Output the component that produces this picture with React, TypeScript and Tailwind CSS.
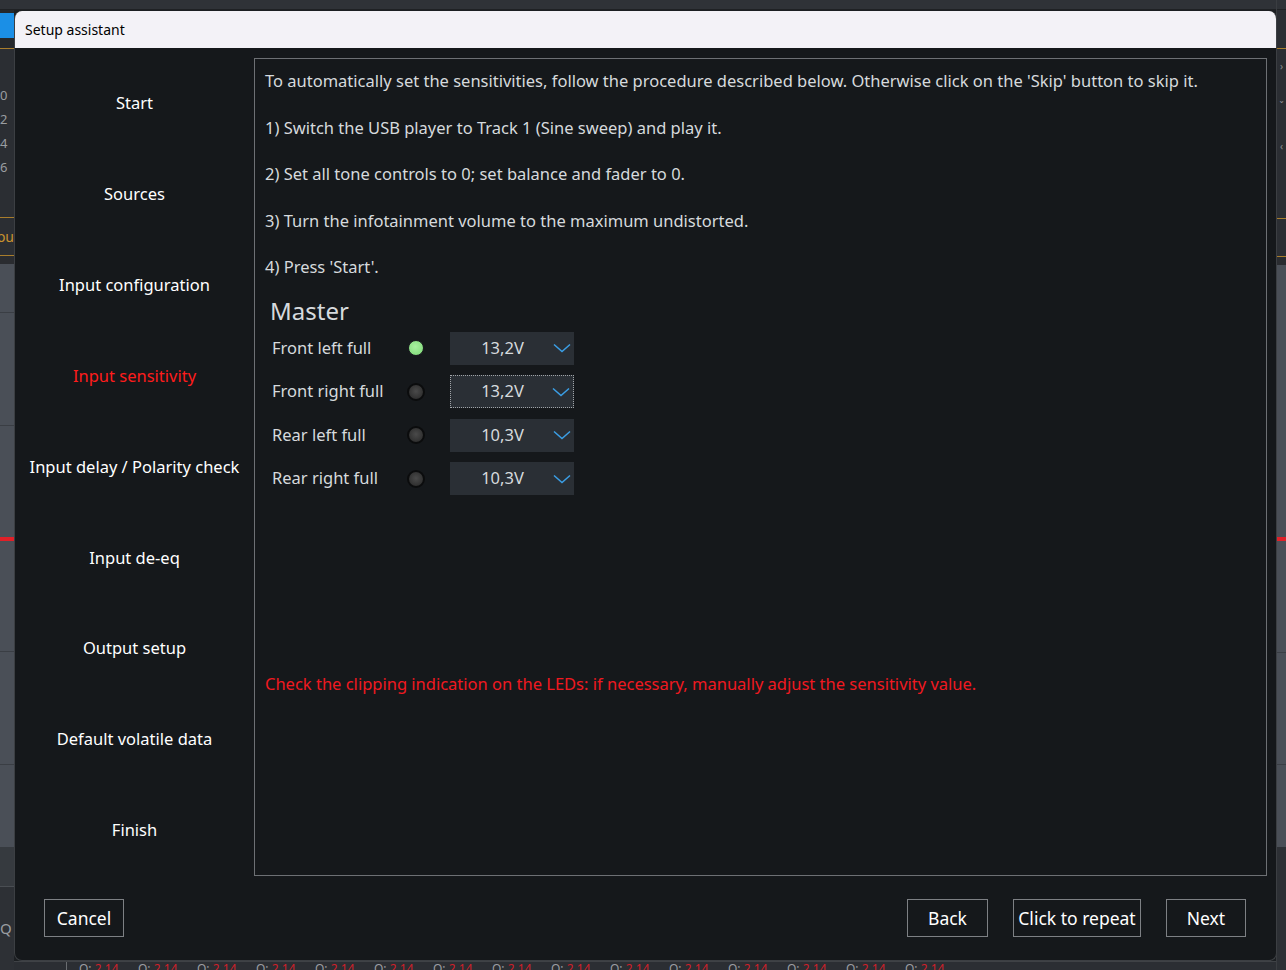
import React from 'react';

const STEPS = [
  'Start',
  'Sources',
  'Input configuration',
  'Input sensitivity',
  'Input delay / Polarity check',
  'Input de-eq',
  'Output setup',
  'Default volatile data',
  'Finish',
];

const CHANNELS = [
  { name: 'Front left full', value: '13,2V', on: true, focus: false },
  { name: 'Front right full', value: '13,2V', on: false, focus: true },
  { name: 'Rear left full', value: '10,3V', on: false, focus: false },
  { name: 'Rear right full', value: '10,3V', on: false, focus: false },
];

const LINES = [
  "To automatically set the sensitivities, follow the procedure described below. Otherwise click on the 'Skip' button to skip it.",
  '1) Switch the USB player to Track 1 (Sine sweep) and play it.',
  '2) Set all tone controls to 0; set balance and fader to 0.',
  '3) Turn the infotainment volume to the maximum undistorted.',
  "4) Press 'Start'.",
];

function Chevron() {
  return (
    <svg width="18" height="10" viewBox="0 0 18 10" fill="none">
      <path d="M1 1.5 L9 8.5 L17 1.5" stroke="#3b9fe6" strokeWidth="1.5" />
    </svg>
  );
}

function Led({ on }: { on: boolean }) {
  return on ? (
    <span className="w-[16px] h-[16px] rounded-full bg-[radial-gradient(circle_at_45%_40%,#a8f0a0,#7cd874)] border border-[#1b1e21]" />
  ) : (
    <span className="w-[18px] h-[18px] rounded-full bg-[radial-gradient(circle_at_50%_45%,#4a4a4a,#262626)] border-2 border-[#0b0c0d]" />
  );
}

function Btn({ label, w }: { label: string; w: string }) {
  return (
    <button className={`${w} h-[38px] border border-[#7d8084] text-[17.5px] text-white flex items-center justify-center`}>
      {label}
    </button>
  );
}

function LeftStrip() {
  return (
    <div className="w-[14px] flex flex-col shrink-0 text-[13px] text-[#9a9da1] leading-none overflow-hidden">
      <div className="h-[10px] bg-[#2f3237] border-b border-[#1f2124]" />
      <div className="h-[3px] bg-[#25282c]" />
      <div className="h-[25px] bg-[#1b8fe6]" />
      <div className="h-[10px] bg-[#25282c]" />
      <div className="h-[170px] bg-[#2b2e33] border-t border-b border-[#a87d2c] flex flex-col pt-[40px] gap-[11px]">
        <span>0</span>
        <span>2</span>
        <span>4</span>
        <span>6</span>
      </div>
      <div className="h-[38px] bg-[#2b2e33] border-b border-[#a87d2c] flex items-center justify-end text-[14px] text-[#c8922e]">
        <span className="whitespace-nowrap">ou</span>
      </div>
      <div className="h-[8px] bg-[#2a2c30]" />
      <div className="h-[49px] bg-[#4a4f57] border-b border-[#3a3e44]" />
      <div className="h-[113px] bg-[#4a4f57] border-b border-[#3a3e44]" />
      <div className="h-[111px] bg-[#4a4f57]" />
      <div className="h-[4px] bg-[#e02028]" />
      <div className="h-[111px] bg-[#4a4f57] border-b border-[#3a3e44]" />
      <div className="h-[113px] bg-[#4a4f57] border-b border-[#3a3e44]" />
      <div className="h-[82px] bg-[#4a4f57]" />
      <div className="h-[40px] bg-[#363a3f] border-b border-[#4a4e53]" />
      <div className="flex-1 bg-[#2d3035] pt-[34px] text-[15px]">Q</div>
    </div>
  );
}

function RightStrip() {
  return (
    <div className="w-[10px] flex flex-col shrink-0 border-l border-[#3a3d41]">
      <div className="h-[10px] bg-[#2f3237] border-b border-[#1f2124]" />
      <div className="h-[38px] bg-[#2b2e33]" />
      <div className="h-[171px] bg-[#2b2e33] border-t border-b border-[#a87d2c] flex flex-col items-center pt-[12px] gap-[30px] text-[10px] text-[#8a8d91] leading-none">
        <span>›</span>
        <span>ˇ</span>
        <span>‹</span>
      </div>
      <div className="h-[38px] bg-[#2b2e33] border-b border-[#a87d2c]" />
      <div className="h-[8px] bg-[#2a2c30]" />
      <div className="h-[272px] bg-[#4a4f57]" />
      <div className="h-[4px] bg-[#e02028]" />
      <div className="h-[112px] bg-[#4a4f57] border-b border-[#3a3e44]" />
      <div className="h-[112px] bg-[#4a4f57] border-b border-[#3a3e44]" />
      <div className="h-[82px] bg-[#4a4f57]" />
      <div className="flex-1 bg-[#2d3035]" />
    </div>
  );
}

export default function App() {
  return (
    <div
      className="relative w-[1286px] h-[970px] overflow-hidden bg-[#2b2e33] flex"
      style={{ fontFamily: '"Noto Sans", "Open Sans", sans-serif' }}
    >
      <LeftStrip />
      <div className="flex-1 flex flex-col">
        <div className="h-[10px] bg-[#2f3237] border-b border-[#1f2124]" />
        <div className="flex-1 bg-[#1c1f22]" />
        <div className="h-[9px] bg-[#2b2e33] border-t border-[#3f4246] flex items-start pl-[52px] text-[12px] leading-[12px] overflow-hidden">
          <span className="w-[1px] h-[9px] bg-[#6a6d71] mr-[12px]" />
          {Array.from({ length: 15 }).map((_, i) => (
            <span key={i} className="w-[59px] shrink-0 whitespace-nowrap pt-[1px]">
              <span className="text-[#9a9da1]">Q: </span>
              <span className="text-[#d0202a]">2.14</span>
            </span>
          ))}
        </div>
      </div>
      <RightStrip />

      {/* dialog */}
      <div className="absolute left-[14px] top-[11px] w-[1263px] h-[950px] rounded-[8px] overflow-hidden flex flex-col bg-[#15181b] border border-[#3c3f43] border-t-0">
        <div className="h-[37px] bg-[#f3f2f7] flex items-center pl-[10px] text-[14px] text-black shrink-0">
          Setup assistant
        </div>
        <div className="flex pt-[10px] pr-[9px]">
          <div className="w-[239px] flex flex-col">
            {STEPS.map(s => (
              <div
                key={s}
                className={`h-[90.9px] flex items-center justify-center text-[16.5px] ${
                  s === 'Input sensitivity' ? 'text-[#ff1c1c]' : 'text-white'
                }`}
              >
                {s}
              </div>
            ))}
          </div>
          <div className="flex-1 h-[818px] border border-[#6d7074] pl-[10px] pt-[10px] text-[#d6dadd] text-[16.5px]">
            <div className="flex flex-col">
              {LINES.map(l => (
                <div key={l} className="h-[46.5px] whitespace-nowrap">
                  {l}
                </div>
              ))}
            </div>
            <div className="pl-[5px] -mt-[9px] text-[24px] text-[#d6dadd]">Master</div>
            <div className="flex flex-col pl-[7px] -mt-[2px]">
              {CHANNELS.map(c => (
                <div key={c.name} className="h-[43.5px] flex items-center">
                  <span className="w-[124px] whitespace-nowrap">{c.name}</span>
                  <span className="w-[40px] flex justify-center">
                    <Led on={c.on} />
                  </span>
                  <div
                    className={`w-[124px] h-[33px] ml-[14px] bg-[#2a2f35] flex items-center ${
                      c.focus ? 'border border-dotted border-[#a0a4a8]' : ''
                    }`}
                  >
                    <span className="flex-1 text-center pl-[2px]">{c.value}</span>
                    <span className="pr-[3px] flex items-center">
                      <Chevron />
                    </span>
                  </div>
                </div>
              ))}
            </div>
            <div className="mt-[171px] text-[#f01820] whitespace-nowrap">
              Check the clipping indication on the LEDs: if necessary, manually adjust the sensitivity value.
            </div>
          </div>
        </div>
        <div className="flex-1 flex items-center pl-[29px] pr-[30px]">
          <Btn label="Cancel" w="w-[80px]" />
          <div className="flex-1" />
          <div className="flex gap-[25px]">
            <Btn label="Back" w="w-[81px]" />
            <Btn label="Click to repeat" w="w-[128px]" />
            <Btn label="Next" w="w-[80px]" />
          </div>
        </div>
      </div>
    </div>
  );
}
